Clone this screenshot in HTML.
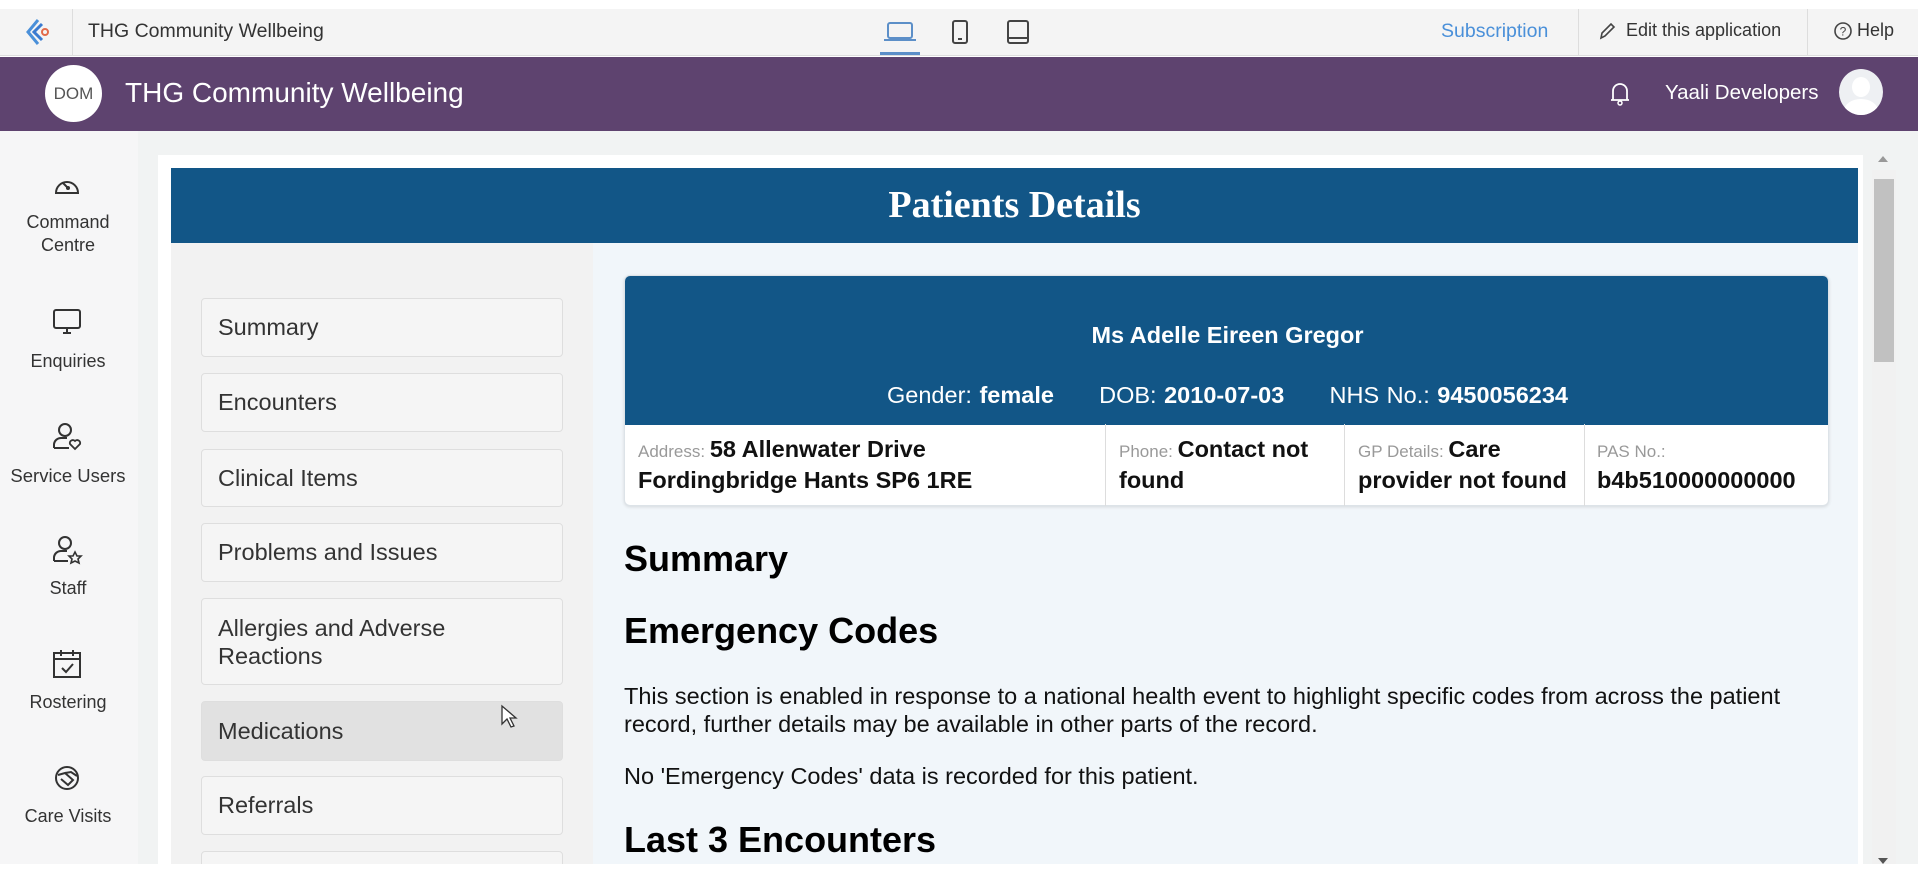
<!DOCTYPE html>
<html><head><meta charset="utf-8"><style>
*{margin:0;padding:0;box-sizing:border-box}
body{width:1918px;height:894px;overflow:hidden;background:#fff;font-family:"Liberation Sans",Arial,sans-serif;position:relative}
.a{position:absolute}
.top{left:0;top:9px;width:1918px;height:47px;background:#f4f4f4;border-bottom:1px solid #ddd}
.purple{left:0;top:57px;width:1918px;height:74px;background:#5e436f}
.side{left:0;top:131px;width:138px;height:733px;background:#f6f6f7}
.main{left:138px;top:131px;width:1780px;height:733px;background:#f1f3f3}
.card{left:158px;top:155px;width:1705px;height:709px;background:#fff}
.sl{color:#333;font-size:18px;text-align:center;width:136px;left:0;line-height:23px}
.nav{left:30px;width:362px;background:#f5f5f5;border:1px solid #dedede;border-radius:4px;font-size:23.5px;color:#333;padding-left:16px;display:flex;align-items:center}
.h{color:#000;font-weight:bold;left:624px}
.p{left:624px;font-size:23.5px;color:#111}
.lab{color:#999;font-size:17px;font-weight:normal}
.cell{top:424px;height:82px;font-size:23.5px;font-weight:bold;color:#111;padding:11px 10px 0 13px;line-height:28px;border-right:1px solid #ddd;overflow:hidden}
</style></head><body>
<div class="a top"></div>
<svg class="a" style="left:22px;top:16px" width="32" height="32" viewBox="0 0 32 32"><path d="M16 4 L6 16 L16 28" fill="none" stroke="#4a90d9" stroke-width="3"/><path d="M20 8 L12 16 L20 24" fill="none" stroke="#3a7bd0" stroke-width="3"/><circle cx="23" cy="16" r="3" fill="none" stroke="#e36b4a" stroke-width="2"/></svg>
<div class="a" style="left:72px;top:9px;width:1px;height:47px;background:#ddd"></div>
<div class="a" style="left:88px;top:20px;font-size:19.5px;color:#333">THG Community Wellbeing</div>
<svg class="a" style="left:882px;top:20px" width="36" height="24" viewBox="0 0 36 24"><rect x="6" y="3" width="24" height="15" rx="2" fill="none" stroke="#5c8fc8" stroke-width="2"/><path d="M2 20 H34" stroke="#5c8fc8" stroke-width="2"/></svg>
<div class="a" style="left:880px;top:52px;width:40px;height:3px;background:#5c8fc8"></div>
<svg class="a" style="left:950px;top:19px" width="20" height="26" viewBox="0 0 20 26"><rect x="3" y="2" width="14" height="22" rx="2" fill="none" stroke="#444" stroke-width="2"/><path d="M8 20 H12" stroke="#444" stroke-width="2"/></svg>
<svg class="a" style="left:1006px;top:19px" width="24" height="26" viewBox="0 0 24 26"><rect x="2" y="2" width="20" height="22" rx="2" fill="none" stroke="#444" stroke-width="2"/><path d="M2 19 H22" stroke="#444" stroke-width="2"/></svg>
<div class="a" style="left:1441px;top:20px;font-size:19.5px;color:#4a90d9">Subscription</div>
<div class="a" style="left:1578px;top:9px;width:1px;height:47px;background:#ddd"></div>
<svg class="a" style="left:1598px;top:21px" width="18" height="20" viewBox="0 0 18 20"><path d="M3 17 L4 12 L13 3 L16 6 L7 15 Z" fill="none" stroke="#444" stroke-width="1.6"/></svg>
<div class="a" style="left:1626px;top:20px;font-size:18px;color:#333">Edit this application</div>
<div class="a" style="left:1807px;top:9px;width:1px;height:47px;background:#ddd"></div>
<svg class="a" style="left:1833px;top:21px" width="20" height="20" viewBox="0 0 20 20"><circle cx="10" cy="10" r="8" fill="none" stroke="#444" stroke-width="1.6"/><text x="10" y="14.5" font-size="12" text-anchor="middle" fill="#444" font-family="Liberation Sans">?</text></svg>
<div class="a" style="left:1857px;top:20px;font-size:18px;color:#333">Help</div>

<div class="a purple"></div>
<div class="a" style="left:45px;top:65px;width:57px;height:57px;border-radius:50%;background:#fff;color:#555;font-size:17px;display:flex;align-items:center;justify-content:center">DOM</div>
<div class="a" style="left:125px;top:77px;font-size:28px;color:#fff">THG Community Wellbeing</div>
<svg class="a" style="left:1608px;top:80px" width="24" height="28" viewBox="0 0 24 28"><path d="M5 20 V11 a7 7 0 0 1 14 0 V20 H3 H21" fill="none" stroke="#fff" stroke-width="1.8"/><circle cx="12" cy="23" r="2" fill="none" stroke="#fff" stroke-width="1.5"/></svg>
<div class="a" style="left:1665px;top:81px;font-size:20.5px;color:#fff">Yaali Developers</div>
<div class="a" style="left:1839px;top:69px;width:44px;height:46px;border-radius:50%;background:#eef0f3;overflow:hidden"><div class="a" style="left:13px;top:8px;width:18px;height:20px;border-radius:50%;background:#fff"></div><div class="a" style="left:5px;top:30px;width:34px;height:24px;border-radius:50%;background:#fff"></div></div>

<div class="a side"></div>
<div class="a main"></div>
<div class="a card"></div>

<!-- sidebar -->
<svg class="a" style="left:52px;top:171px" width="30" height="28" viewBox="0 0 30 28"><path d="M4 22 a11 11 0 1 1 22 0 Z" fill="none" stroke="#333" stroke-width="2"/><path d="M11 12 L16 17" stroke="#333" stroke-width="2"/><circle cx="16" cy="17" r="2" fill="#333"/></svg>
<div class="a sl" style="top:211px">Command<br>Centre</div>
<svg class="a" style="left:51px;top:307px" width="32" height="30" viewBox="0 0 32 30"><rect x="3" y="3" width="26" height="18" rx="2" fill="none" stroke="#333" stroke-width="2"/><path d="M12 26 H20 M16 21 V26" stroke="#333" stroke-width="2"/></svg>
<div class="a sl" style="top:350px">Enquiries</div>
<svg class="a" style="left:51px;top:421px" width="32" height="32" viewBox="0 0 32 32"><circle cx="14" cy="9" r="6" fill="none" stroke="#333" stroke-width="2"/><path d="M3 27 V23 a7 7 0 0 1 7 -6 H16" fill="none" stroke="#333" stroke-width="2"/><path d="M3 27 H18" stroke="#333" stroke-width="2"/><path d="M24 28 L19 23 a3 3 0 0 1 5 -3 a3 3 0 0 1 5 3 Z" fill="none" stroke="#333" stroke-width="1.8"/></svg>
<div class="a sl" style="top:464px;font-size:18.5px">Service Users</div>
<svg class="a" style="left:51px;top:534px" width="32" height="32" viewBox="0 0 32 32"><circle cx="14" cy="9" r="6" fill="none" stroke="#333" stroke-width="2"/><path d="M3 27 V23 a7 7 0 0 1 7 -6 H16 M3 27 H17" fill="none" stroke="#333" stroke-width="2"/><path d="M24 18 L26 22 L30 22 L27 25 L28 29 L24 27 L20 29 L21 25 L18 22 L22 22 Z" fill="none" stroke="#333" stroke-width="1.6"/></svg>
<div class="a sl" style="top:577px">Staff</div>
<svg class="a" style="left:51px;top:648px" width="32" height="32" viewBox="0 0 32 32"><rect x="3" y="5" width="26" height="24" fill="none" stroke="#333" stroke-width="2"/><path d="M3 11 H29 M10 2 V8 M22 2 V8" stroke="#333" stroke-width="2"/><path d="M11 20 L15 24 L22 16" fill="none" stroke="#333" stroke-width="2"/></svg>
<div class="a sl" style="top:691px">Rostering</div>
<svg class="a" style="left:51px;top:763px" width="32" height="30" viewBox="0 0 32 30"><circle cx="16" cy="15" r="11" fill="none" stroke="#333" stroke-width="2"/><path d="M7 12 L14 10 L22 17 L17 22 L10 16 M14 10 L20 9 L26 13" fill="none" stroke="#333" stroke-width="2"/></svg>
<div class="a sl" style="top:805px">Care Visits</div>

<!-- content -->
<div class="a" style="left:171px;top:168px;width:1687px;height:75px;background:#125687;color:#fff;font-family:'Liberation Serif',serif;font-weight:bold;font-size:38px;text-align:center;line-height:75px">Patients Details</div>
<div class="a" style="left:171px;top:243px;width:422px;height:621px;background:#f2f2f2;overflow:hidden">
<div class="a nav" style="top:55px;height:59px">Summary</div>
<div class="a nav" style="top:130px;height:59px">Encounters</div>
<div class="a nav" style="top:206px;height:58px">Clinical Items</div>
<div class="a nav" style="top:280px;height:59px">Problems and Issues</div>
<div class="a nav" style="top:355px;height:87px;line-height:28px">Allergies and Adverse<br>Reactions</div>
<div class="a nav" style="top:458px;height:60px;background:#e1e1e1">Medications</div>
<div class="a nav" style="top:533px;height:59px">Referrals</div>
<div class="a nav" style="top:608px;height:59px"></div>
</div>
<div class="a" style="left:593px;top:243px;width:1265px;height:621px;background:#f1f6fa"></div>
<svg class="a" style="left:500px;top:704px" width="20" height="26" viewBox="0 0 20 26"><path d="M2 2 V20 L7 15 L11 23 L14 22 L10 14 L16 14 Z" fill="#fff" stroke="#333" stroke-width="1.3"/></svg>

<div class="a" style="left:624px;top:275px;width:1205px;height:231px;background:#fff;border:1px solid #dde3e8;border-radius:6px;overflow:hidden;box-shadow:0 1px 3px rgba(0,0,0,.12)">
 <div class="a" style="left:0;top:0;width:1205px;height:149px;background:#125687"></div>
 <div class="a" style="left:0;top:46px;width:1205px;text-align:center;color:#fff;font-weight:bold;font-size:23.5px">Ms Adelle Eireen Gregor</div>
 <div class="a" style="left:0;top:106px;width:1205px;text-align:center;color:#fff;font-size:23.5px;word-spacing:1px">Gender: <b>female</b> &nbsp;&nbsp;&nbsp;&nbsp; DOB: <b>2010-07-03</b> &nbsp;&nbsp;&nbsp;&nbsp; NHS No.: <b>9450056234</b></div>
</div>
<div class="a cell" style="left:625px;width:481px"><span class="lab">Address: </span>58 Allenwater Drive<br>Fordingbridge Hants SP6 1RE</div>
<div class="a cell" style="left:1106px;width:239px"><span class="lab">Phone: </span>Contact not found</div>
<div class="a cell" style="left:1345px;width:240px;padding-right:4px"><span class="lab">GP Details: </span>Care provider not found</div>
<div class="a cell" style="left:1585px;width:243px;border-right:none;padding-left:12px"><span class="lab">PAS No.: </span><br>b4b510000000000</div>

<div class="a h" style="top:538px;font-size:36px">Summary</div>
<div class="a h" style="top:610px;font-size:36px">Emergency Codes</div>
<div class="a p" style="top:682px;line-height:28px;width:1220px;white-space:nowrap">This section is enabled in response to a national health event to highlight specific codes from across the patient<br>record, further details may be available in other parts of the record.</div>
<div class="a p" style="top:763px">No 'Emergency Codes' data is recorded for this patient.</div>
<div class="a h" style="top:819px;font-size:36px">Last 3 Encounters</div>

<div class="a" style="left:1872px;top:170px;width:24px;height:694px;background:#f1f1f1"></div>
<div class="a" style="left:1874px;top:179px;width:20px;height:183px;background:#c1c1c1"></div>
<div class="a" style="left:1878px;top:156px;width:0;height:0;border-left:5px solid transparent;border-right:5px solid transparent;border-bottom:6px solid #999"></div>
<div class="a" style="left:1878px;top:858px;width:0;height:0;border-left:5px solid transparent;border-right:5px solid transparent;border-top:6px solid #555"></div>
</body></html>
